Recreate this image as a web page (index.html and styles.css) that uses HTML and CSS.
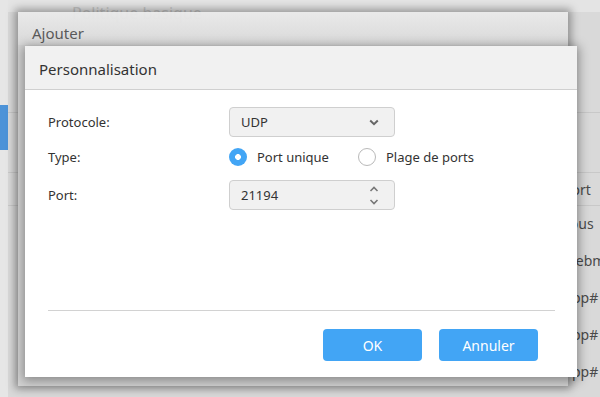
FILE: index.html
```html
<!DOCTYPE html>
<html lang="fr">
<head>
<meta charset="utf-8">
<link rel="stylesheet" href="styles.css">
</head>
<body>
<div class="page">
  <aside class="sidebar">
    <div class="side-item"></div>
  </aside>
  <main class="content">
    <div class="page-title">Politique basique</div>
    <div class="table">
      <div class="thead"></div>
      <div class="row head">Port</div>
      <div class="row">Tous</div>
      <div class="row">Webm</div>
      <div class="row">App#</div>
      <div class="row">App#</div>
      <div class="row">App#</div>
    </div>
  </main>
</div>

<div class="dialog-back">
  <div class="back-title">Ajouter</div>
  <div class="back-body"></div>
</div>

<div class="dialog">
  <div class="dialog-head">Personnalisation</div>
  <div class="dialog-body">
    <div class="form">
      <label class="lbl">Protocole:</label>
      <div class="field select">
        <span>UDP</span>
        <svg class="chev" width="10" height="7" viewBox="0 0 10 7"><polyline points="1.2,1.5 5,5.2 8.8,1.5" fill="none" stroke="#666" stroke-width="2"/></svg>
      </div>

      <label class="lbl lbl-type">Type:</label>
      <div class="radios">
        <span class="radio on"></span><span class="rtext">Port unique</span>
        <span class="radio"></span><span class="rtext">Plage de ports</span>
      </div>

      <label class="lbl">Port:</label>
      <div class="field spin">
        <span>21194</span>
        <span class="arrows">
          <svg width="10" height="6" viewBox="0 0 10 6"><polyline points="1.5,5 5,1.5 8.5,5" fill="none" stroke="#777" stroke-width="1.6"/></svg>
          <svg width="10" height="6" viewBox="0 0 10 6"><polyline points="1.5,1 5,4.5 8.5,1" fill="none" stroke="#777" stroke-width="1.6"/></svg>
        </span>
      </div>
    </div>
    <div class="spacer"></div>
    <div class="footer">
      <button class="btn">OK</button>
      <button class="btn">Annuler</button>
    </div>
  </div>
</div>
</body>
</html>
```

FILE: styles.css
```css
* { box-sizing: border-box; }
html, body {
  margin: 0;
  width: 600px;
  height: 397px;
  overflow: hidden;
}
body {
  font-family: "Noto Sans", "Open Sans", sans-serif;
  background: #d6d6d6;
  color: #333;
  position: relative;
}
.page {
  display: flex;
  height: 397px;
}
.sidebar {
  width: 18px;
  background: #e6e6e6;
  padding-top: 105px;
}
.side-item {
  width: 8px;
  height: 45px;
  background: #4d93d8;
}
.content {
  flex: 1;
  background: #d9d9d9;
  display: flex;
  flex-direction: column;
}
.page-title {
  height: 12px;
  padding-left: 64px;
  font-size: 16px;
  line-height: 26px;
  color: #c4c4c4;
  background: #e4e4e4;
  white-space: nowrap;
}
.table {
  padding-top: 100px;
  display: flex;
  flex-direction: column;
}
.thead {
  height: 61px;
  border-top: 1px solid #c8c8c8;
  border-bottom: 1px solid #c8c8c8;
}
.row {
  height: 37px;
  padding-left: 555px;
  font-size: 14px;
  line-height: 36px;
  color: #4a4a4a;
  white-space: nowrap;
}
.row.head {
  height: 33px;
  line-height: 34px;
  border-bottom: 1px solid #c8c8c8;
}

/* Back dialog: "Ajouter" */
.dialog-back {
  position: absolute;
  left: 18px;
  top: 12px;
  width: 550px;
  height: 374px;
  display: flex;
  flex-direction: column;
  box-shadow: 0 0 8px 3px rgba(0,0,0,0.35);
}
.back-title {
  height: 33px;
  padding-left: 14px;
  font-size: 15px;
  line-height: 42px;
  color: #5a5a5a;
  background: linear-gradient(rgba(235,235,235,0.9), #d9d9d9);
}
.back-body {
  flex: 1;
  background: #d3d3d3;
}

/* Front dialog */
.dialog {
  position: absolute;
  left: 25px;
  top: 46px;
  width: 552px;
  height: 331px;
  background: #fff;
  display: flex;
  flex-direction: column;
  box-shadow: 0 2px 10px 2px rgba(0,0,0,0.35);
}
.dialog-head {
  height: 44px;
  padding-left: 14px;
  font-size: 15px;
  line-height: 46px;
  color: #333;
  background: #f1f1f1;
  border-bottom: 1px solid #d0d0d0;
}
.dialog-body {
  flex: 1;
  display: flex;
  flex-direction: column;
  padding: 17px 22px 16px 23px;
}
.form {
  display: grid;
  grid-template-columns: 181px 166px;
  grid-template-rows: 30px 43px 30px;
  align-items: center;
  font-size: 13px;
}
.lbl { color: #333; }
.lbl-type { padding-bottom: 3px; }
.field {
  height: 30px;
  border: 1px solid #cfcfcf;
  border-radius: 4px;
  background: #f1f1f1;
  display: flex;
  align-items: center;
  justify-content: space-between;
  padding: 0 15px 0 11px;
  font-size: 13px;
  color: #333;
}
.chev { margin-top: 1px; }
.arrows {
  display: flex;
  flex-direction: column;
  gap: 7px;
}
.arrows svg { display: block; }
.radios {
  display: flex;
  align-items: center;
  padding-bottom: 3px;
  white-space: nowrap;
}
.radio {
  width: 18px;
  height: 18px;
  border-radius: 50%;
  border: 1px solid #b9b9b9;
  background: #fff;
  flex: none;
}
.radio.on {
  border: none;
  background: radial-gradient(circle, #fff 0 2.6px, #42a5f5 3.2px);
}
.rtext {
  margin-left: 10px;
  margin-right: 29px;
}
.spacer { flex: 1; }
.footer {
  border-top: 1px solid #d2d2d2;
  padding-top: 18px;
  padding-right: 17px;
  display: flex;
  justify-content: flex-end;
  gap: 17px;
}
.btn {
  width: 99px;
  height: 32px;
  border: none;
  border-radius: 4px;
  background: #42a5f5;
  color: #fff;
  font-family: "Noto Sans", "Open Sans", sans-serif;
  font-size: 14px;
  padding: 0;
}
```
